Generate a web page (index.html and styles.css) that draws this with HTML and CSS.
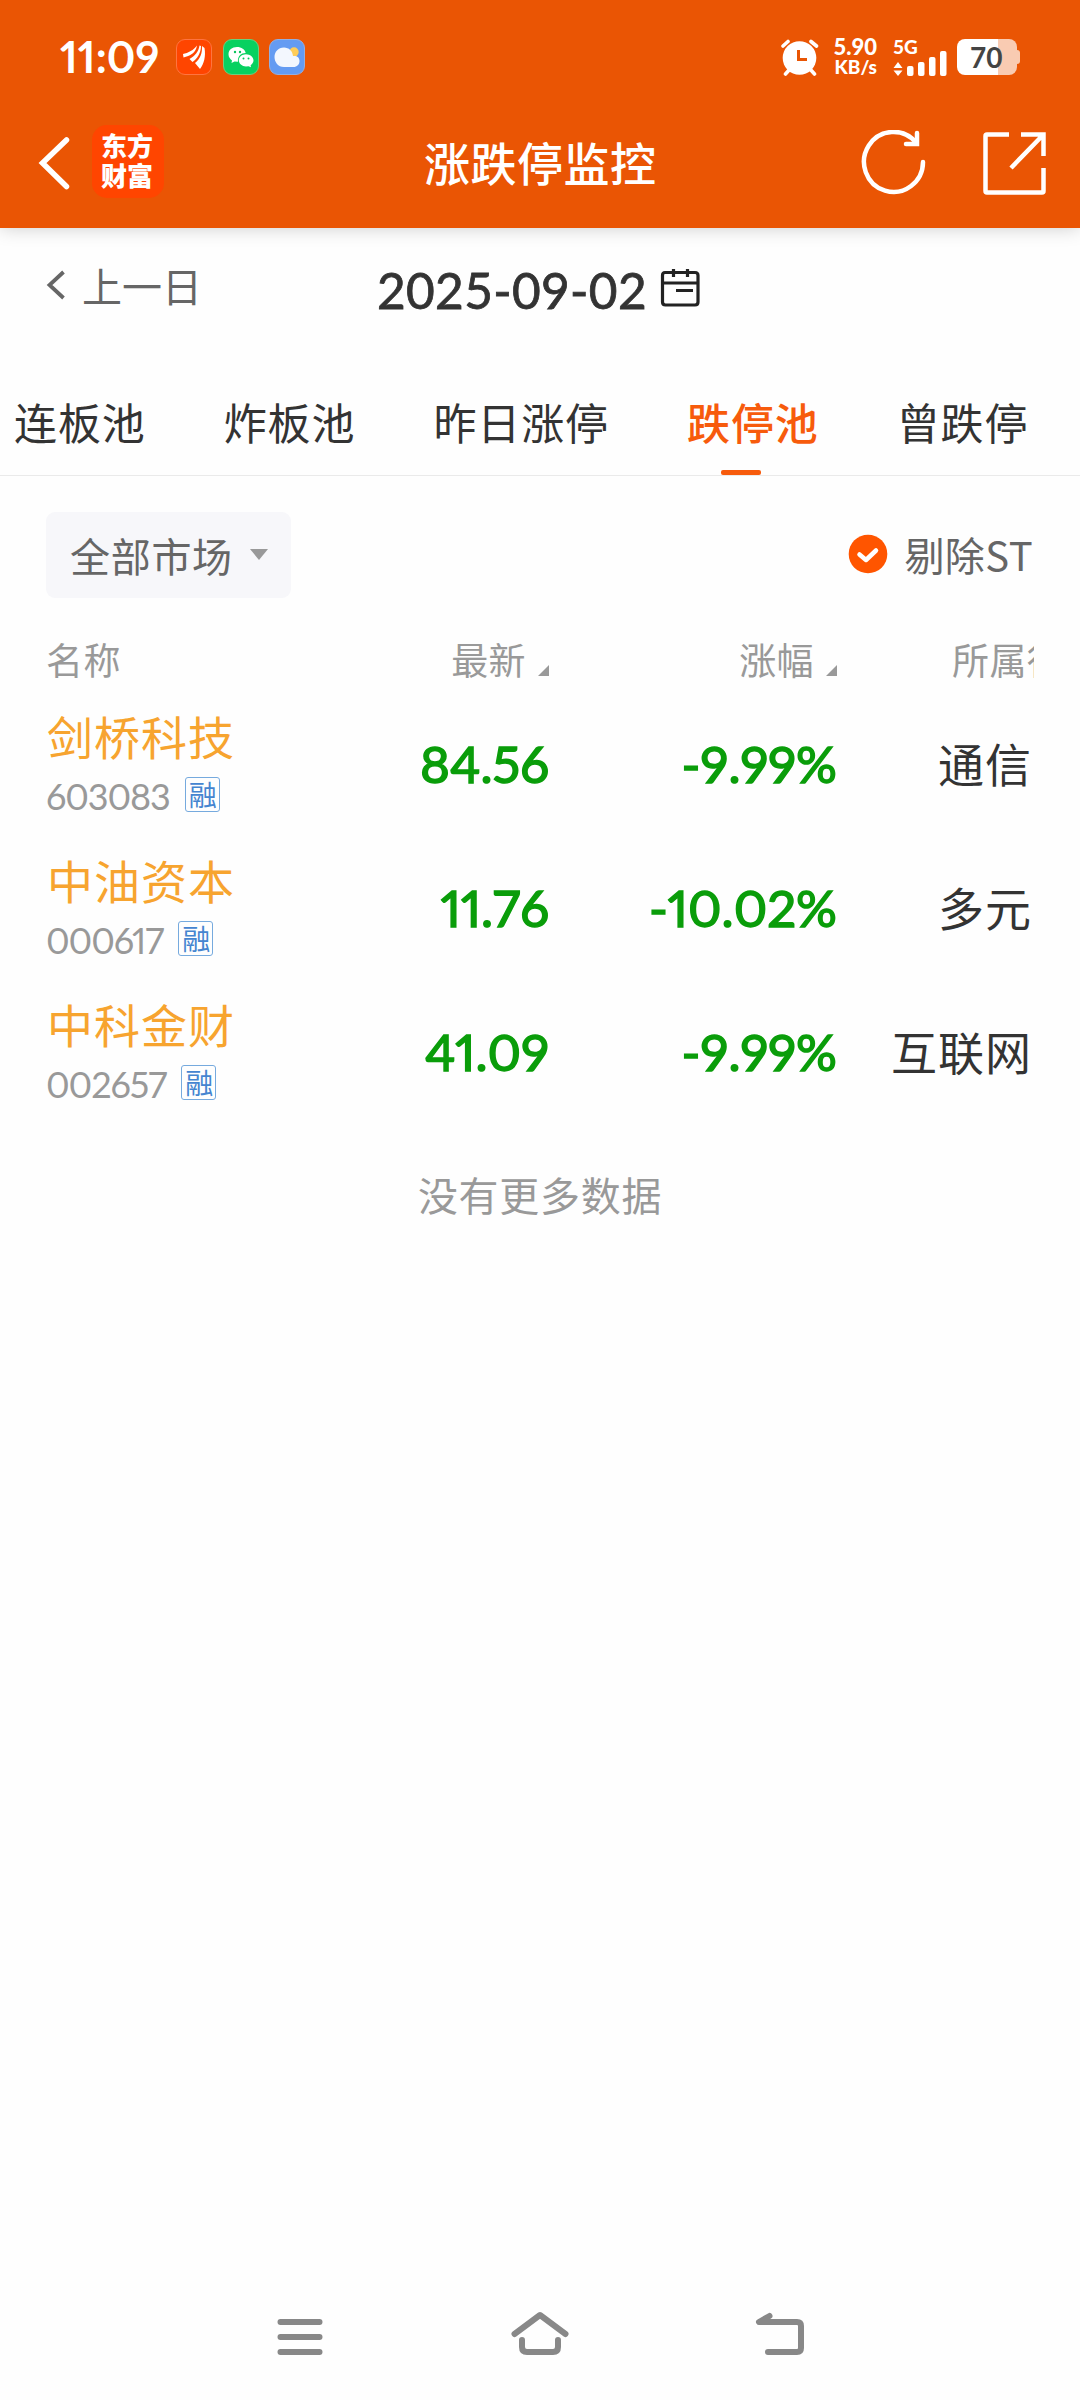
FILE: index.html
```html
<!DOCTYPE html>
<html lang="zh-CN">
<head>
<meta charset="utf-8">
<title>涨跌停监控</title>
<link rel="stylesheet" href="styles.css">
</head>
<body>
<header class="top">
  <div class="status">
    <span class="clock">11:09</span>
    <svg class="app" viewBox="0 0 36 36"><rect x=".5" y=".5" width="35" height="35" rx="8.5" fill="#ff4500" stroke="#ff7440"/><path fill="#fff" d="M7 15C12 14 18 11 21 6.500C20 14 14 17 7.500 18.500ZM13.500 20C19 17 22.500 13 23.500 6.500L25 7C25 14 21 20 16.500 23ZM19 24C24 20 26.500 14 26 7L28.500 9C30 17 28 25 24 30Z"/></svg>
    <svg class="app" viewBox="0 0 36 36"><rect x=".5" y=".5" width="35" height="35" rx="8.500" fill="#07d160" stroke="#6bd07c"/><path fill="#fff" d="M14 8C9 8 5.500 11 5.500 15.300C5.500 18 7 20 9 21.400L8.500 24L11.500 22.500L15 22.700C14.500 17 18 14 22.700 14C22 10.500 18.500 8 14 8ZM23 15.200C19 15.200 15.800 18 15.800 21.300S19 27.500 23 27.500L25.500 27.200L28 28.300L27.600 26.200C29.300 25 30.500 23.300 30.500 21.300C30.500 18 27 15.200 23 15.200Z"/><g fill="#07c45c"><circle cx="12" cy="13" r="1.200"/><circle cx="17" cy="13" r="1.200"/><circle cx="20.500" cy="19.500" r="1"/><circle cx="25.500" cy="19.500" r="1"/></g></svg>
    <svg class="app" viewBox="0 0 36 36"><rect x=".5" y=".5" width="35" height="35" rx="8.500" fill="#649bf2" stroke="#94aee0"/><circle cx="25" cy="13" r="4.700" fill="#ffcd59"/><path fill="#f3f7fe" d="M15 8.500C9 8.500 5.500 13 5.500 18S9 28 15 28H24.500C28 28 30.500 25.500 30.500 22S28 16.500 24 17C23.500 12 20 8.500 15 8.500Z"/></svg>
    <svg class="alarm" viewBox="780 38 38 38"><circle cx="798.500" cy="58" r="16.800" fill="#fff"/><path d="M782 46L787 41.500M810 41.500L815.500 46M784.500 74L789 69M809 69L813.500 74" fill="none" stroke="#fff" stroke-width="3.600" stroke-linecap="round"/><path d="M797.500 50V59.500H806" fill="none" stroke="#e95504" stroke-width="3"/></svg>
    <div class="speed"><span>5.90</span><span class="unit">KB/s</span></div>
    <div class="signal"><span>5G</span>
      <svg class="bars" viewBox="893 50 56 25"><path fill="#fff" d="M893.500 67L898 61L902.500 67ZM893.500 69.500L898 75L902.500 69.500Z"/><g fill="#fff"><rect x="907" y="65" width="6.500" height="10" rx="2"/><rect x="918" y="61" width="6.500" height="14" rx="2"/><rect x="929" y="56" width="6.500" height="19" rx="2"/><rect x="940" y="50" width="6.500" height="25" rx="2"/></g></svg>
    </div>
    <div class="battery"><span>70</span></div>
  </div>
  <div class="bar">
    <svg class="back" viewBox="38 135 33 56"><path d="M66.500 140L42.500 163L66.500 186.500" fill="none" stroke="#fff" stroke-width="5.500" stroke-linecap="round"/></svg>
    <div class="logo"><span>东方</span><span>财富</span></div>
    <h1>涨跌停监控</h1>
    <svg class="refresh" viewBox="861 130 66 66"><path d="M923 162A29.500 30 0 1 1 916 142.500" fill="none" stroke="#fff" stroke-width="4.500" stroke-linecap="round"/><path d="M917 133V144H906" fill="none" stroke="#fff" stroke-width="4.500" stroke-linecap="round"/></svg>
    <svg class="export" viewBox="982 130 65 65"><path d="M1009 133.500H987Q985.500 133.500 985.500 135V190Q985.500 191.500 987 191.500H1042Q1043.500 191.500 1043.500 190V167M1021 133.500H1043.500V155M1043 134L1011 167" fill="none" stroke="#fff" stroke-width="4.500"/></svg>
  </div>
</header>
<main>
  <div class="day">
    <div class="prev"><svg viewBox="46 269 20 32"><path d="M63.500 272L49.500 285L63.500 298" fill="none" stroke="#666" stroke-width="3.800"/></svg><span>上一日</span></div>
    <div class="date"><span>2025-09-02</span><svg viewBox="659 269 40 40"><path d="M664 273.500H694Q697 273.500 697 276.500V303Q697 306 694 306H664.500Q661.500 306 661.500 303V276.500Q661.500 273.500 664 273.500ZM661.500 284H697M675 291.500H692M672.500 270V278M686.500 270V278" fill="none" stroke="#222" stroke-width="3.200"/></svg></div>
  </div>
  <nav class="tabs"><span>连板池</span><span>炸板池</span><span>昨日涨停</span><span class="on">跌停池</span><span>曾跌停</span></nav>
  <div class="filters">
    <div class="market"><span>全部市场</span><i></i></div>
    <div class="nost"><svg viewBox="0 0 40 40"><circle cx="20" cy="20" r="19.300" fill="#ff5500"/><path d="M11.500 20.500L18 26L28 16.500" fill="none" stroke="#fff" stroke-width="4.500" stroke-linecap="round" stroke-linejoin="round"/></svg><span>剔除ST</span></div>
  </div>
  <section class="table">
    <div class="row head"><span>名称</span><span class="sort">最新<i></i></span><span class="sort">涨幅<i></i></span><span class="ind">所属行业</span></div>
    <div class="row"><div class="stock"><b>剑桥科技</b><p><span>603083</span><em>融</em></p></div><span class="num">84.56</span><span class="num">-9.99%</span><span class="sector">通信</span></div>
    <div class="row"><div class="stock"><b>中油资本</b><p><span>000617</span><em>融</em></p></div><span class="num">11.76</span><span class="num">-10.02%</span><span class="sector">多元</span></div>
    <div class="row"><div class="stock"><b>中科金财</b><p><span>002657</span><em>融</em></p></div><span class="num">41.09</span><span class="num">-9.99%</span><span class="sector">互联网</span></div>
  </section>
  <p class="end">没有更多数据</p>
</main>
<footer class="sysnav">
  <svg viewBox="270 2305 60 60"><path d="M280.500 2322H319.500M280.500 2337H319.500M280.500 2352H319.500"/></svg>
  <svg viewBox="510 2305 60 60"><path d="M514.500 2334L540 2315L565.500 2334M522 2340V2347Q522 2352 527 2352H553Q558 2352 558 2347V2340"/></svg>
  <svg viewBox="750 2305 60 60"><path d="M769.500 2316L759 2322H797Q801 2322 801 2326V2348Q801 2352 797 2352H768"/></svg>
</footer>
</body>
</html>
```
FILE: styles.css
```css
* { box-sizing: border-box; margin: 0; padding: 0; }
body { width: 1080px; height: 2400px; display: flex; flex-direction: column; overflow: hidden; background: #fefefe; color: #333; font-family: "Noto Sans CJK SC", sans-serif; }
svg { display: block; flex: none; }
i, em, b { font-style: normal; font-weight: 400; }

.top { height: 228px; background: #ea5504; color: #fff; box-shadow: 0 0 18px rgba(0,0,0,.2); }
.status { display: flex; align-items: center; height: 114px; padding: 0 63px 0 60px; font-family: Lato, sans-serif; font-weight: 700; }
.clock { width: 116px; font-size: 43px; letter-spacing: .1px; line-height: 50px; white-space: nowrap; font-feature-settings: "pnum"; }
.app { width: 36px; height: 36px; margin-right: 10.500px; }
.alarm { width: 38px; height: 38px; margin-left: auto; }
.speed { width: 44px; margin-left: 14px; display: flex; flex-direction: column; align-items: flex-end; font-size: 22px; line-height: 20px; font-weight: 900; }
.unit { font-size: 19px; line-height: 20px; }
.signal { width: 56px; height: 37px; margin-left: 16px; font-size: 19px; line-height: 16px; font-weight: 900; }
.bars { width: 56px; height: 25px; margin-top: -4px; }
.battery { position: relative; width: 60px; height: 36px; margin-left: 8px; border-radius: 8px; background: linear-gradient(90deg, #fff 41px, #f9cbb2 41px); color: #444; font-size: 28px; line-height: 36px; padding-left: 13px; }
.battery::after { content: ""; position: absolute; left: 60px; top: 11px; width: 3px; height: 14px; border-radius: 0 3px 3px 0; background: #f9cbb2; }
.bar { display: flex; align-items: center; height: 98px; padding: 0 33px 0 38px; }
.back { width: 33px; height: 56px; }
.logo { display: flex; flex-direction: column; width: 72px; height: 73px; margin: -3px 0 0 21px; padding: 5px 2px 0 0; border-radius: 15px; background: #ff4500; font-size: 26px; font-weight: 900; line-height: 30px; text-align: center; }
h1 { margin: -4px 0 0 260px; font-size: 46px; font-weight: 500; letter-spacing: .5px; line-height: 60px; }
.refresh { width: 66px; height: 66px; margin-left: auto; }
.export { width: 65px; height: 65px; margin-left: 55px; }

.day { display: flex; align-items: center; height: 124px; padding-left: 46px; }
.prev { display: flex; align-items: center; width: 331px; margin-top: -10px; color: #666; font-size: 40px; }
.prev svg { width: 20px; height: 32px; margin-right: 16px; }
.date { display: flex; align-items: center; gap: 13px; font: 400 49.500px/60px Lato, sans-serif; letter-spacing: .35px; -webkit-text-stroke: .8px #333; }
.date svg { width: 40px; height: 40px; margin-top: -4px; }

.tabs { display: flex; height: 124px; margin-left: -25px; padding-top: 37px; border-bottom: 1px solid #eaeaea; white-space: nowrap; font-size: 43px; letter-spacing: .9px; line-height: 64px; }
.tabs span { flex: none; padding: 0 39px; }
.tabs .on { display: flex; flex-direction: column; justify-content: space-between; color: #f75b0c; font-weight: 500; }
.tabs .on::after { content: ""; width: 40px; height: 5px; margin-left: 34px; border-radius: 2px; background: #f75b0c; }

.filters { display: flex; justify-content: space-between; padding: 36px 47px 0 46px; color: #666; font-size: 40px; }
.market { display: flex; align-items: center; width: 245px; height: 86px; padding-left: 24px; border-radius: 9px; background: #f7f7fa; letter-spacing: .7px; }
.market i { margin: -2px 0 0 17px; border: 9px solid transparent; border-top: 11px solid #999; border-bottom: 0; }
.nost { display: flex; align-items: center; height: 84px; letter-spacing: .4px; }
.nost svg { width: 40px; height: 40px; margin: -1px 16px 0 0; }

.table { padding: 27px 46px 0; }
.row { display: grid; grid-template-columns: 225px 278px 288px 197px; height: 144px; align-items: center; }
.head { height: 67px; color: #999; font-size: 37px; letter-spacing: .4px; }
.sort { display: flex; justify-content: flex-end; align-items: flex-end; }
.sort i { margin: 0 0 10px 12px; border-left: 11px solid transparent; border-bottom: 11px solid #999; }
.ind { margin-left: 115px; overflow: hidden; white-space: nowrap; }
.stock b { display: block; margin: -3px 0 4px; padding-left: 1px; color: #f7a42f; font-size: 46px; letter-spacing: 1px; line-height: 60px; }
.stock p { display: flex; align-items: center; gap: 15px; color: #999; font: 36px/50px Lato, sans-serif; font-feature-settings: "pnum"; letter-spacing: -1.100px; }
.stock span { padding-top: 2px; }
.stock em { width: 35px; height: 35px; border: 1.500px solid #76aade; border-radius: 3px; color: #4585d0; font: 28px/32px "Noto Sans CJK SC", sans-serif; text-align: center; }
.num { color: #0a9d0a; font: 400 51px/60px Lato, sans-serif; font-feature-settings: "pnum"; font-kerning: none; -webkit-text-stroke: 1.500px #0a9d0a; text-align: right; }
.sector { margin: -5px 2px 0 0; text-align: right; font-size: 46px; letter-spacing: 1px; }
.end { margin-top: 40px; text-align: center; color: #999; font-size: 40px; letter-spacing: .7px; line-height: 60px; }
.sysnav { display: flex; gap: 180px; padding: 0 0 35px 270px; margin-top: auto; }
.sysnav svg { width: 60px; height: 60px; fill: none; stroke: #888; stroke-width: 6; stroke-linecap: round; stroke-linejoin: round; }
```
